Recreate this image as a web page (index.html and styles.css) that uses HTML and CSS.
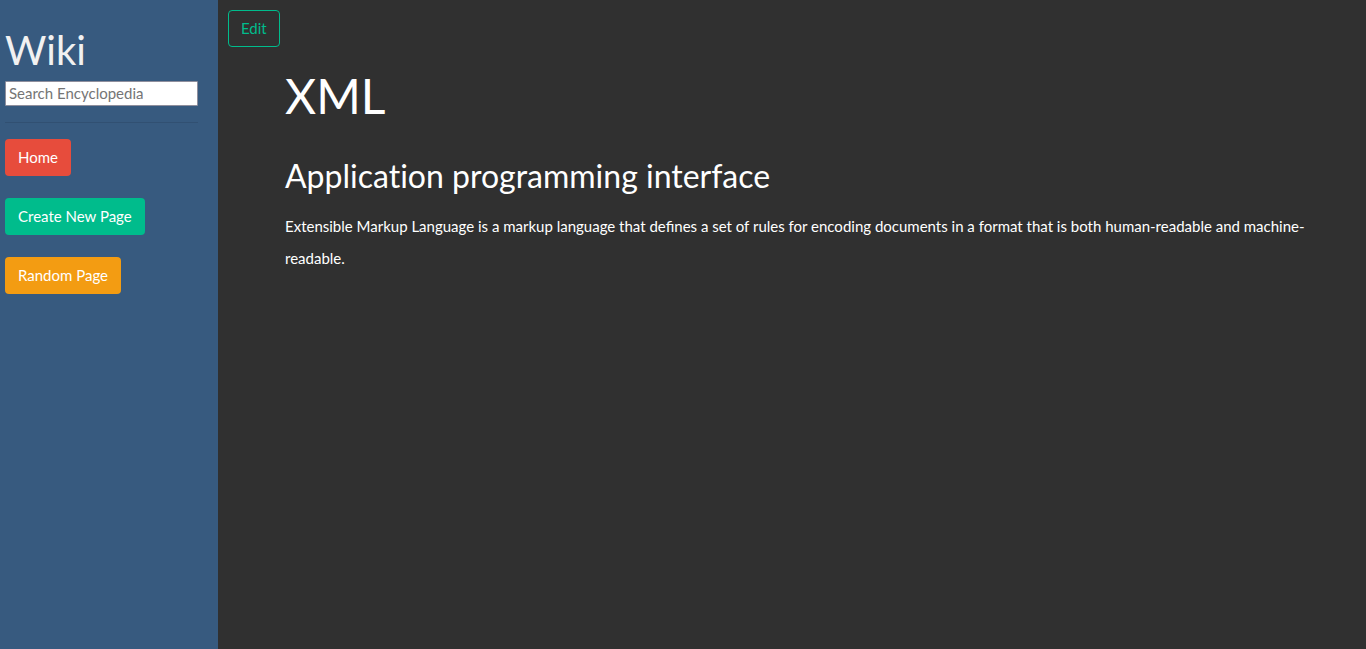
FILE: index.html
```html
<!DOCTYPE html>
<html lang="en">
<head>
  <meta charset="utf-8">
  <title>XML</title>
  <link rel="stylesheet" href="styles.css">
</head>
<body>
  <div class="layout">
    <aside class="sidebar">
      <h2 class="brand">Wiki</h2>
      <form class="search-form">
        <input class="search" type="search" name="q" placeholder="Search Encyclopedia" aria-label="Search Encyclopedia">
      </form>
      <hr class="divider">
      <nav class="menu">
        <a class="btn btn-home" href="#">Home</a>
        <a class="btn btn-create" href="#">Create New Page</a>
        <a class="btn btn-random" href="#">Random Page</a>
      </nav>
    </aside>
    <main class="main">
      <a class="btn btn-edit" href="#">Edit</a>
      <article class="entry">
        <h1 class="title">XML</h1>
        <h2 class="subtitle">Application programming interface</h2>
        <p class="text">Extensible Markup Language is a markup language that defines a set of rules for encoding documents in a format that is both human-readable and machine-readable.</p>
      </article>
    </main>
  </div>
</body>
</html>
```

FILE: styles.css
```css
*,
*::before,
*::after {
  box-sizing: border-box;
}

body {
  margin: 0;
  font-family: Lato, "Liberation Sans", sans-serif;
  font-size: 15px;
  line-height: 23px;
  color: #fff;
  background: #303030;
}

.layout {
  display: grid;
  grid-template-columns: 218px 1fr;
  min-height: 100vh;
}

.sidebar {
  padding: 27px 20px 20px 5px;
  background: #375a7f;
}

.brand {
  margin: 0 0 7px;
  font-size: 40px;
  font-weight: 400;
  line-height: 47px;
  color: #f1f1f1;
}

.search {
  display: block;
  width: 100%;
  height: 25px;
  margin: 0;
  padding: 0 3px 1px;
  border: 1px solid #8f8f9d;
  border-radius: 1px;
  font: inherit;
  background: #fff;
  color: #000;
}

.search::placeholder {
  color: #757575;
}

.divider {
  margin: 16px 0;
  border: 0;
  border-top: 1px solid rgba(0, 0, 0, 0.1);
}

.menu {
  display: flex;
  flex-direction: column;
  align-items: flex-start;
  gap: 22px;
}

.btn {
  display: inline-block;
  padding: 6px 12px;
  border: 1px solid transparent;
  border-radius: 4px;
  color: #fff;
  text-decoration: none;
}

.btn-home {
  background: #e74c3c;
}

.btn-create {
  background: #00bc8c;
}

.btn-random {
  background: #f39c12;
}

.btn-edit {
  border-color: #00bc8c;
  color: #00bc8c;
}

.main {
  padding: 10px;
}

.entry {
  padding: 20px 20px 0 57px;
}

.title {
  margin: 0 0 32px;
  font-size: 48px;
  font-weight: 400;
  line-height: 58px;
}

.subtitle {
  margin: 0 0 15px;
  font-size: 32px;
  font-weight: 400;
  line-height: 38px;
  font-variant-ligatures: no-common-ligatures;
}

.text {
  margin: 0;
  line-height: 32px;
}
```
